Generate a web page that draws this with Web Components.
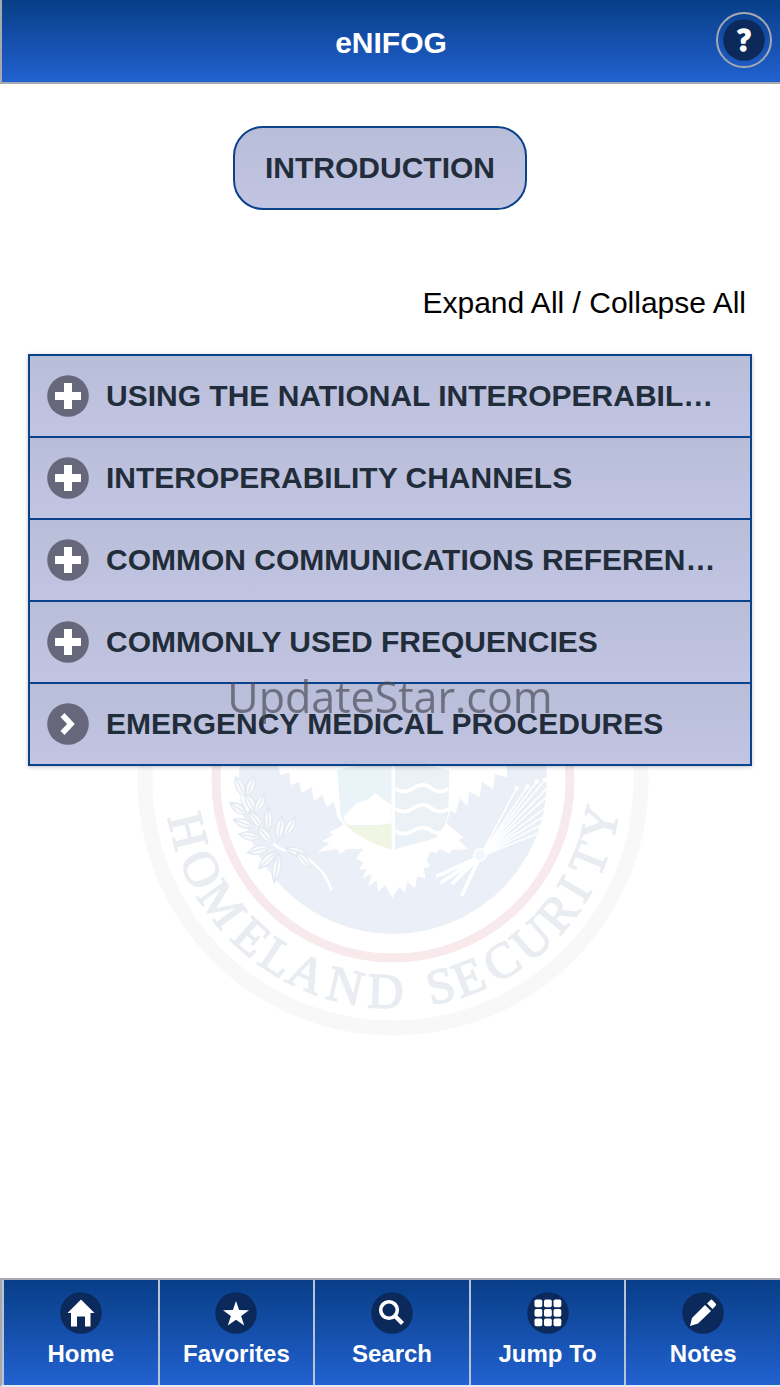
<!DOCTYPE html>
<html lang="en">
<head>
<meta charset="UTF-8">
<meta name="viewport" content="width=device-width, initial-scale=1">
<title>eNIFOG</title>
<style>
  :root {
    --bar-top: #083e87;
    --bar-bottom: #2261d0;
    --line: #0b428c;
    --panel-top: #b8bdd8;
    --panel-bottom: #c2c5e2;
    --ink: #222d3b;
    --rule: #a6a9b0;
  }

  body {
    margin: 0;
    background: #fff;
    font-family: "Liberation Sans", Arial, sans-serif;
  }
</style>
</head>
<body>
<guide-app></guide-app>

<script>
// glyphs are drawn on a 42 x 42 disc
const ICONS = {
  plus: '<path d="M17 8h8v9h9v8h-9v9h-8v-9H8v-8h9z"/>',
  chevron: '<path d="M15.500 12l8.500 9-8.500 9" fill="none" stroke="#fff" stroke-width="5.500"/>',
  home: '<path d="M21 7.5L34.5 21H30.5V34.5H25V24.5H17V34.5H11V21H7.5z"/>',
  star: '<path d="M21 9l3.100 9 9.900.2-7.900 5.800 3.100 9.500-8.200-5.800-8.200 5.800 3.100-9.500-7.900-5.800 9.900-.2z"/>',
  search: '<g fill="none" stroke="#fff"><circle cx="18" cy="18" r="8.3" stroke-width="3.6"/><path d="M23.5 23.5l8 8" stroke-width="4.2"/></g>',
  grid: [7.5, 17, 26.5].map(y => [7.5, 17, 26.5].map(x =>
    `<rect x="${x}" y="${y}" width="7.8" height="7.8" rx="1.8"/>`).join('')).join(''),
  pencil: '<path d="M8 34l2-8 13-13 6 6-13 12.5z"/><path d="M25 11.5L28.6 8q.8-.8 1.6 0l3.6 3.8q.7.8 0 1.6L30.600 17z"/>',
  help: '<text x="21" y="32" text-anchor="middle" font-family="Lato, sans-serif" font-size="31" font-weight="900" stroke="#fff" stroke-width="1.500" stroke-linejoin="round">?</text>'
};

class DiscIcon extends HTMLElement {
  constructor() {
    super();
    const shadow = this.attachShadow({ mode: 'open' });
    shadow.innerHTML = `
      <style>
        :host { display: block; flex: none; width: 42px; height: 42px; }
        svg { display: block; width: 100%; height: 100%; }
        circle.disc { fill: var(--disc, #0b2a5b); }
      </style>
      <svg viewBox="0 0 42 42" fill="#fff" aria-hidden="true">
        <circle class="disc" cx="21" cy="21" r="20.8"/>
        ${ICONS[this.getAttribute('name')] || ''}
      </svg>
    `;
  }
}

class GuideHeader extends HTMLElement {
  constructor() {
    super();
    const shadow = this.attachShadow({ mode: 'open' });
    shadow.innerHTML = `
      <style>
        :host { display: block; }
        header {
          display: grid;
          grid-template-columns: 56px 1fr 56px;
          align-items: center;
          height: 82px;
          padding: 0 8px;
          border-left: 2px solid var(--rule);
          border-bottom: 2px solid var(--rule);
          background: linear-gradient(var(--bar-top), var(--bar-bottom));
        }
        h1 {
          grid-column: 2;
          margin: 0;
          padding-top: 4px;
          color: #fff;
          font-size: 30px;
          line-height: 36px;
          text-align: center;
        }
        button {
          display: flex;
          align-items: center;
          justify-content: center;
          width: 56px;
          height: 56px;
          margin: 0 0 2px;
          padding: 0;
          border: 2px solid var(--rule);
          border-radius: 50%;
          background: none;
          cursor: pointer;
        }
      </style>
      <header>
        <h1><slot></slot></h1>
        <button type="button" aria-label="Help"><disc-icon name="help"></disc-icon></button>
      </header>
    `;
  }
}

class TopicRow extends HTMLElement {
  constructor() {
    super();
    const link = this.hasAttribute('href');
    const open = link ? `<a class="row" href="${this.getAttribute('href')}">` : '<button class="row" type="button" aria-expanded="false">';
    const close = link ? '</a>' : '</button>';
    const shadow = this.attachShadow({ mode: 'open' });
    shadow.innerHTML = `
      <style>
        :host { display: block; }
        :host(:not(:first-child)) { border-top: 2px solid var(--line); }
        h2 { margin: 0; font-size: 30px; }
        .row {
          display: flex;
          align-items: center;
          gap: 17px;
          box-sizing: border-box;
          width: 100%;
          height: 80px;
          margin: 0;
          padding: 0 17px;
          border: 0;
          background: linear-gradient(var(--panel-top), var(--panel-bottom));
          color: var(--ink);
          font: inherit;
          text-align: left;
          text-decoration: none;
          cursor: pointer;
        }
        disc-icon { --disc: #66677b; }
        .label {
          min-width: 0;
          overflow: hidden;
          line-height: 36px;
          text-overflow: ellipsis;
          white-space: nowrap;
        }
      </style>
      <h2>${open}
        <disc-icon name="${link ? 'chevron' : 'plus'}"></disc-icon>
        <span class="label"><slot></slot></span>
      ${close}</h2>
    `;
    const button = shadow.querySelector('button');
    if (button) {
      button.addEventListener('click', () => this.toggle(button.getAttribute('aria-expanded') !== 'true'));
    }
  }

  toggle(expanded) {
    const button = this.shadowRoot.querySelector('button');
    if (button) button.setAttribute('aria-expanded', String(expanded));
  }
}

class TopicList extends HTMLElement {
  constructor() {
    super();
    const shadow = this.attachShadow({ mode: 'open' });
    shadow.innerHTML = `
      <style>
        :host {
          display: block;
          border: 2px solid var(--line);
          box-shadow: 0 1px 4px rgba(0, 0, 0, .25);
        }
      </style>
      <slot></slot>
    `;
  }
}

// Sets a word round the lower rim of the seal. Each letter has
// [letter, degrees from the lowest point, advance width in em].
function rimWord(letters) {
  const size = 50;
  const radius = 228;
  const xs = [], ys = [], turns = [];
  letters.forEach(([, deg, em]) => {
    const a = deg * Math.PI / 180;
    const half = size * em / 2;
    xs.push((256 - radius * Math.sin(a) - half * Math.cos(a)).toFixed(1));
    ys.push((256 + radius * Math.cos(a) - half * Math.sin(a)).toFixed(1));
    turns.push(deg);
  });
  const word = letters.map(l => l[0]).join('');
  return `<text font-size="${size}" x="${xs.join(' ')}" y="${ys.join(' ')}" rotate="${turns.join(' ')}">${word}</text>`;
}

class AgencySeal extends HTMLElement {
  constructor() {
    super();
    // [x, y, angle, length] for each olive leaf
    const leaves = [
      [330, 80, 65, 32], [362, 78, 110, 32], [325, 145, 35, 30], [362, 130, 60, 34],
      [390, 130, 115, 34], [340, 190, 20, 32], [378, 180, 50, 34], [415, 178, 90, 36],
      [358, 228, 10, 32], [405, 225, 50, 34], [450, 205, 100, 38], [480, 200, 120, 34],
      [385, 270, -15, 34], [412, 300, -45, 36], [440, 325, -80, 44], [500, 275, 15, 34],
      [520, 300, 50, 30]
    ];
    const arrows = [[1160, 85], [1192, 80], [1220, 65], [1245, 60], [1265, 70], [1262, 100], [1264, 130], [1256, 160], [1258, 182], [1250, 210]];
    const homeland = [['H', 76, .722], ['O', 65, .722], ['M', 54, .889], ['E', 42, .611], ['L', 33, .611], ['A', 24, .722], ['N', 13, .722], ['D', 2, .722]];
    const security = [['S', -13, .556], ['E', -21, .611], ['C', -31, .667], ['U', -41, .722], ['R', -51, .667], ['I', -59, .333], ['T', -68, .611], ['Y', -78, .722]];
    const shadow = this.attachShadow({ mode: 'open' });
    shadow.innerHTML = `
      <style>
        :host { display: block; width: 512px; }
        svg { display: block; width: 100%; }
        text { font-family: "Liberation Serif", serif; fill: #e9edf1; stroke: #e9edf1; stroke-width: 1.5px; }
      </style>
      <svg viewBox="0 0 512 512" role="img" aria-label="Seal">
        <circle cx="256" cy="256" r="248" fill="#fff" stroke="#f8f8f9" stroke-width="15"/>
        <circle cx="256" cy="257" r="177" fill="none" stroke="#f8e9ec" stroke-width="9"/>
        <circle cx="256" cy="256" r="154" fill="#ebeff7"/>
        ${rimWord(homeland)}
        ${rimWord(security)}

        <g transform="translate(-7 236) scale(.3333)">
          <!-- wings, legs and tail -->
          <path fill="#fff" d="M440-20L450 45 478 38 482 76 508 65 515 98 545 80 552 122 577 105 590 142 612 125 622 170 640 195 600 215 608 225 575 245 600 248 562 276 622 266 630 282 650 268 700 266 678 295 700 308 688 330 710 325 698 355 725 342 715 377 740 362 745 397 765 375 787 414 808 380 825 400 832 365 855 385 862 350 886 355 882 325 900 320 890 300 900 275 918 280 930 266 960 282 965 270 1015 268 985 240 1000 232 980 215 950 190 962 152 976 162 990 115 1012 138 1018 95 1050 112 1055 65 1090 88 1095 42 1132 52 1128-20z"/>
          <!-- shield -->
          <path fill="#eaf4f8" d="M622 30Q700 10 785 12V268Q650 225 632 165z"/>
          <path fill="#fff" d="M640 170L680 130 715 118 735 98 760 118 785 135V195H650z"/>
          <path fill="#f1f5e4" d="M642 192L700 200 785 190V270Q700 245 642 192z"/>
          <path fill="#eaf2f7" d="M795 12Q880 12 958 30L955 160Q948 205 915 235L795 268z"/>
          <g fill="none" stroke="#fff" stroke-width="11">
            <path d="M795 85Q820 105 850 85T905 85T956 85"/>
            <path d="M795 145Q820 165 850 145T905 145T956 145"/>
            <path d="M795 212Q820 230 850 212T905 212T950 205"/>
            <path d="M790 10V270" stroke-width="9"/>
          </g>
          <!-- olive branch -->
          <path d="M320 60Q370 230 460 270Q570 290 605 390" fill="none" stroke="#fff" stroke-width="8"/>
          <g fill="#f9fbfd" stroke="#e3e9f1" stroke-width="4">
            ${leaves.map(([x, y, a, r]) => `<g transform="translate(${x} ${y}) rotate(${a})"><path d="M-${r} 0Q0-24 ${r} 0Q0 24-${r} 0zM-${r} 0H${r - 10}"/></g>`).join('')}
          </g>
          <!-- arrows -->
          <g fill="none" stroke="#fff" stroke-width="5">
            ${arrows.map(([x, y]) => `<path d="M1050 290L${x} ${y}"/><circle cx="${x}" cy="${y}" r="4" stroke-width="6"/>`).join('')}
            <path d="M1050 290L918 350M1050 290L930 370M1050 290L965 372M1050 290L995 408" stroke-width="11"/>
            <circle cx="1050" cy="285" r="18" fill="#f3f6fa"/>
          </g>
        </g>
      </svg>
    `;
  }
}

class TabBar extends HTMLElement {
  constructor() {
    super();
    const shadow = this.attachShadow({ mode: 'open' });
    shadow.innerHTML = `
      <style>
        :host { display: block; }
        nav {
          display: flex;
          border: 2px solid var(--rule);
          border-width: 2px 0 0 2px;
          border-bottom: 2px solid #e4e9f4;
        }
      </style>
      <nav aria-label="Main"><slot></slot></nav>
    `;
  }
}

class TabItem extends HTMLElement {
  constructor() {
    super();
    const shadow = this.attachShadow({ mode: 'open' });
    shadow.innerHTML = `
      <style>
        :host {
          display: block;
          flex: 1 1 0;
          min-width: 0;
          border-left: 2px solid #b9c3d6;
        }
        a {
          display: flex;
          flex-direction: column;
          align-items: center;
          gap: 5px;
          padding: 12px 0 16px;
          background: linear-gradient(var(--bar-top), var(--bar-bottom));
          color: #fff;
          font-size: 24px;
          font-weight: bold;
          line-height: 30px;
          text-decoration: none;
        }
      </style>
      <a href="#${this.getAttribute('icon')}">
        <disc-icon name="${this.getAttribute('icon')}"></disc-icon>
        <span><slot></slot></span>
      </a>
    `;
  }
}

class GuideApp extends HTMLElement {
  constructor() {
    super();
    const shadow = this.attachShadow({ mode: 'open' });
    shadow.innerHTML = `
      <style>
        :host {
          display: flex;
          flex-direction: column;
          min-height: 100vh;
        }
        main {
          display: grid;
          flex: 1;
          align-items: start;
        }
        .content, agency-seal { grid-area: 1 / 1; }
        agency-seal {
          justify-self: center;
          margin: 440px 0 0 6px;
        }
        .content {
          z-index: 1;
          display: flex;
          flex-direction: column;
          padding: 42px 28px 0;
        }
        .intro {
          align-self: center;
          box-sizing: border-box;
          height: 84px;
          margin-right: 20px;
          padding: 0 30px;
          border: 2px solid var(--line);
          border-radius: 30px;
          background: linear-gradient(var(--panel-top), var(--panel-bottom));
          color: var(--ink);
          font: bold 30px "Liberation Sans", Arial, sans-serif;
          cursor: pointer;
        }
        .toggles {
          margin: 75px 6px 33px;
          color: #000;
          font-size: 30px;
          line-height: 36px;
          text-align: right;
        }
        .toggles a { color: inherit; text-decoration: none; }
        .stamp {
          position: fixed;
          inset: 0;
          z-index: 2;
          display: grid;
          place-items: center;
          padding-top: 6px;
          color: rgba(70, 72, 84, .66);
          font: 43px "Open Sans", "Noto Sans", sans-serif;
          pointer-events: none;
        }
      </style>
      <guide-header>eNIFOG</guide-header>
      <main>
        <agency-seal></agency-seal>
        <div class="content">
          <button class="intro" type="button">INTRODUCTION</button>
          <div class="toggles"><a href="#expand">Expand All</a> / <a href="#collapse">Collapse All</a></div>
          <topic-list>
            <topic-row>USING THE NATIONAL INTEROPERABIL…</topic-row>
            <topic-row>INTEROPERABILITY CHANNELS</topic-row>
            <topic-row>COMMON COMMUNICATIONS REFEREN…</topic-row>
            <topic-row>COMMONLY USED FREQUENCIES</topic-row>
            <topic-row href="#medical">EMERGENCY MEDICAL PROCEDURES</topic-row>
          </topic-list>
        </div>
      </main>
      <tab-bar>
        <tab-item icon="home">Home</tab-item>
        <tab-item icon="star">Favorites</tab-item>
        <tab-item icon="search">Search</tab-item>
        <tab-item icon="grid">Jump To</tab-item>
        <tab-item icon="pencil">Notes</tab-item>
      </tab-bar>
      <div class="stamp"><span>UpdateStar.com</span></div>
    `;
    const rows = shadow.querySelectorAll('topic-row');
    shadow.querySelector('[href="#expand"]').addEventListener('click', () => rows.forEach(row => row.toggle(true)));
    shadow.querySelector('[href="#collapse"]').addEventListener('click', () => rows.forEach(row => row.toggle(false)));
  }
}

customElements.define('disc-icon', DiscIcon);
customElements.define('guide-header', GuideHeader);
customElements.define('topic-row', TopicRow);
customElements.define('topic-list', TopicList);
customElements.define('agency-seal', AgencySeal);
customElements.define('tab-bar', TabBar);
customElements.define('tab-item', TabItem);
customElements.define('guide-app', GuideApp);
</script>
</body>
</html>
